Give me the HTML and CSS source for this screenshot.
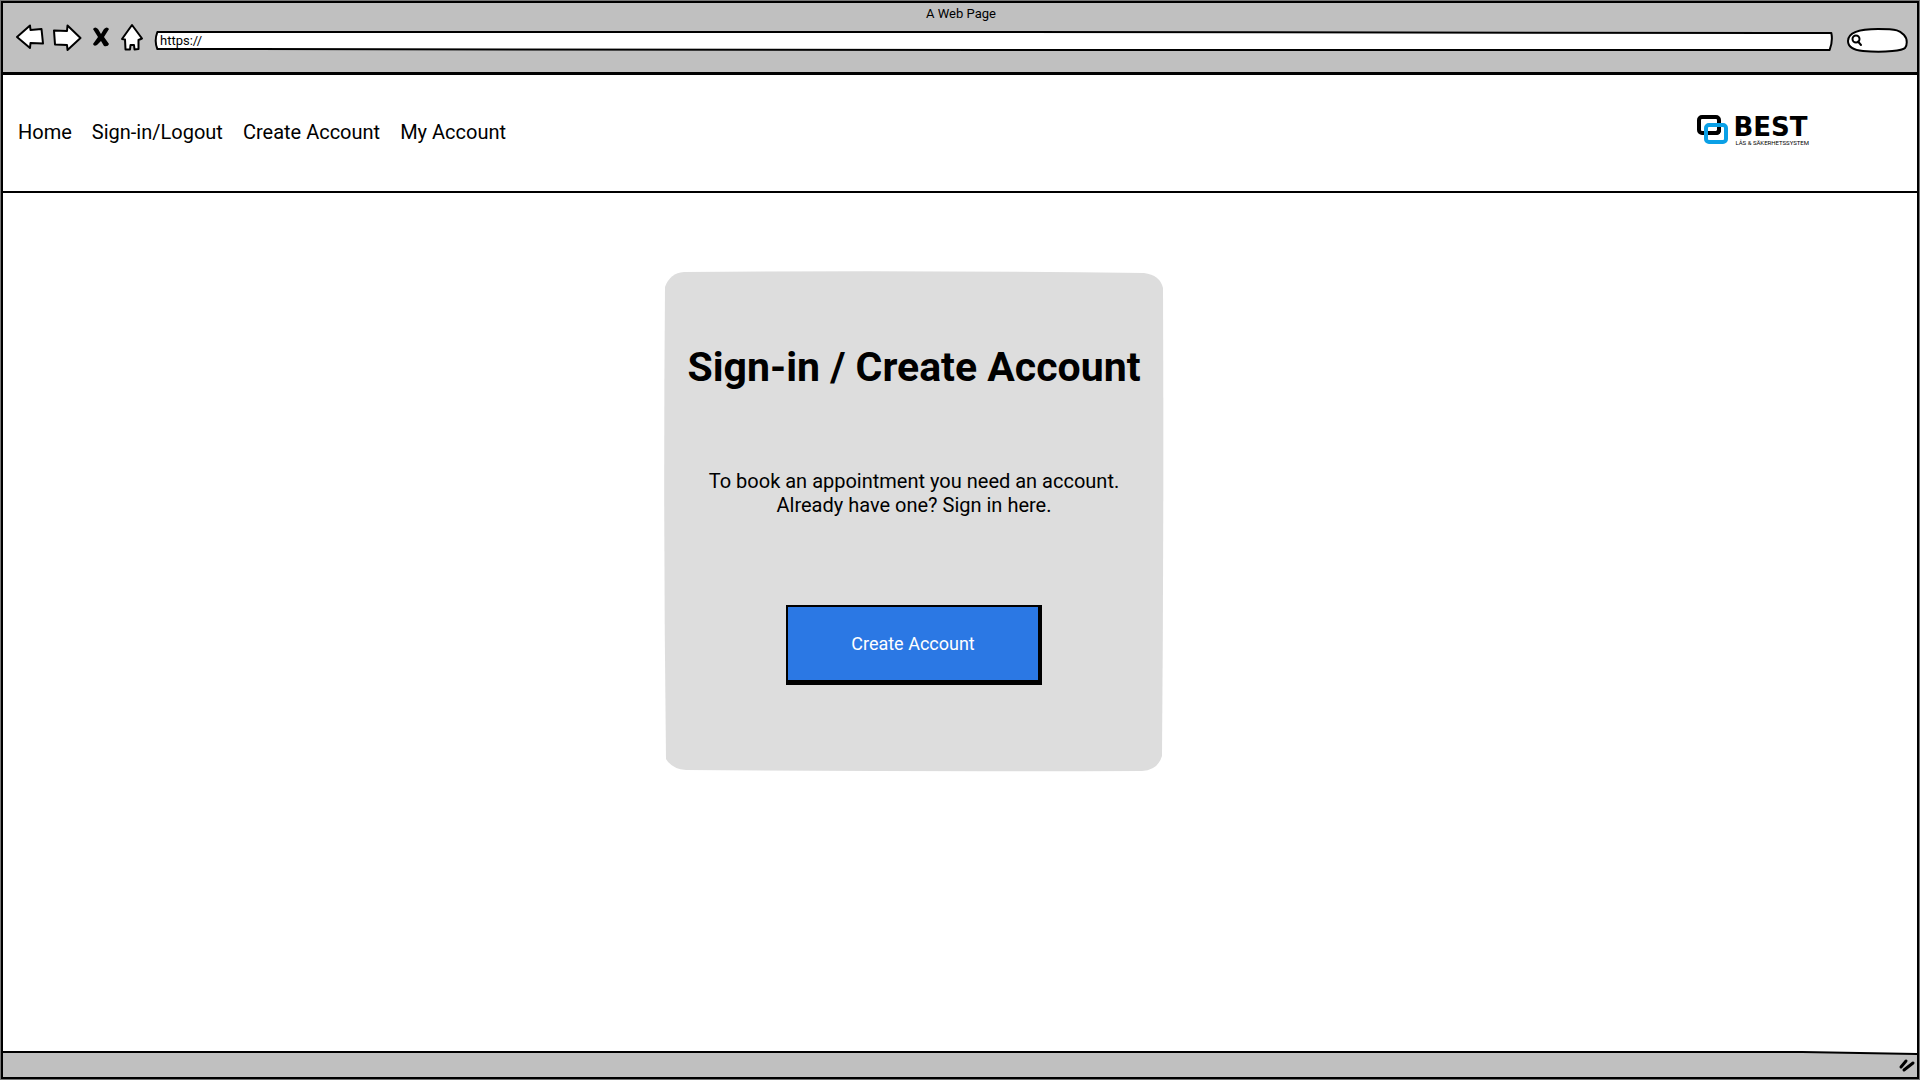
FILE: index.html
```html
<!DOCTYPE html>
<html lang="en">
<head>
<meta charset="utf-8">
<title>A Web Page</title>
<link rel="stylesheet" href="styles.css">
</head>
<body>
<div class="window">
  <div class="chrome">
    <div class="chrome-title">A Web Page</div>
    <div class="toolbar">
      <div class="tools">
        <button class="tool" aria-label="Back"><svg width="30" height="30" viewBox="0 0 30 30"><path class="ink" d="M2 14 15 2.500 15.500 7 26.500 6 28 20.500 15.500 20 15 25Z"/></svg></button>
        <button class="tool" aria-label="Forward"><svg width="30" height="30" viewBox="0 0 30 30"><path class="ink" d="M2 7.500 15 8 15.500 2.500 28.500 15 15.500 27 15 22 3 21.500Z"/></svg></button>
        <button class="tool tool-stop" aria-label="Stop"><svg width="20" height="24" viewBox="0 0 20 24"><path d="M2 3Q4 0 7 3L10 8 13 3Q16 0 18 3L13 11 18 18Q17 21 13 20L10 15 6 19Q3 21 2 18L7 11Z"/></svg></button>
        <button class="tool" aria-label="Home"><svg width="24" height="30" viewBox="0 0 24 30"><path class="ink" d="M12 2 22 15.500 18.500 17 18.500 26 14.500 26.500 14 22 10.500 22 10 26.500 5.500 26.500 5 16.500 2 16Z"/></svg></button>
      </div>
      <div class="field address">
        <svg class="frame" viewBox="0 0 1000 20" preserveAspectRatio="none" aria-hidden="true"><path class="ink" d="M2 1 500 1 999 2Q1000 10 998 19L500 19 2 18Q0 10 2 1Z"/></svg>
        <input class="address-input" type="text" value="https://" aria-label="Address">
      </div>
      <div class="field search">
        <svg class="frame" viewBox="0 0 60 26" preserveAspectRatio="none" aria-hidden="true"><path class="ink" d="M1 13C1 5 10 1 31 1S53 3 57 7 60 18 58 20 40 25 16 23C6 22 1 19 1 13Z"/></svg>
        <svg class="glass" width="12" height="14" viewBox="0 0 12 14" aria-hidden="true"><circle class="line" cx="5" cy="5" r="3.500"/><path class="line" d="M7 7.500 10 11"/></svg>
        <input class="search-input" type="search" aria-label="Search">
      </div>
    </div>
  </div>
  <header class="site-header">
    <nav class="nav">
      <a href="#">Home</a>
      <a href="#">Sign-in/Logout</a>
      <a href="#">Create Account</a>
      <a href="#">My Account</a>
    </nav>
    <a class="logo" href="#">
      <svg width="36" height="32" viewBox="0 0 36 32" aria-hidden="true"><rect x="2" y="3" width="20" height="16" rx="3" fill="none" stroke="#000" stroke-width="4"/><rect x="9" y="11" width="20" height="17" rx="3" fill="none" stroke="#0aa0e6" stroke-width="4"/><path d="M14 19H19Q22 19 22 16V13" fill="none" stroke="#000" stroke-width="4"/></svg>
      <span class="logo-text"><span class="logo-name">BEST</span><span class="logo-tag">LÅS &amp; SÄKERHETSSYSTEM</span></span>
    </a>
  </header>
  <main class="main">
    <section class="card">
      <svg class="frame" viewBox="0 0 500 500" preserveAspectRatio="none" aria-hidden="true"><path fill="#ddd" d="M1 16Q6 2 20 1Q250-1 480 2Q496 4 499 17Q500 250 498 485Q494 499 478 500Q250 501 22 499Q8 498 2 488Q-1 250 1 16Z"/></svg>
      <h1 class="card-title">Sign-in / Create Account</h1>
      <p class="card-text">To book an appointment you need an account.<br>Already have one? Sign in here.</p>
      <button class="cta">Create Account</button>
    </section>
  </main>
  <footer class="status">
    <svg class="frame" viewBox="0 0 1000 26" preserveAspectRatio="none" aria-hidden="true"><path fill="#c0c0c0" d="M0 1H940L1000 3V26H0Z"/><path class="line" d="M0 1H940L1000 3"/></svg>
    <svg class="grip" width="18" height="18" viewBox="0 0 18 18" aria-hidden="true"><path class="thick" d="M3 12 8 6M6 15 15 8"/></svg>
  </footer>
</div>
</body>
</html>
```
FILE: styles.css
```css
* { box-sizing: border-box; }
body {
  margin: 0;
  background: #fff;
  color: #000;
  font-family: Roboto, "Liberation Sans", sans-serif;
  font-size: 20px;
  line-height: 24px;
}
.window {
  display: flex;
  flex-direction: column;
  min-height: 100vh;
  border: 3px solid #000;
  outline: 1px solid #777;
  outline-offset: -1px;
}
.chrome {
  background: #c0c0c0;
  border-bottom: 3px solid #000;
  padding: 3px 10px 18px 12px;
}
.chrome-title { font-size: 13px; line-height: 16px; text-align: center; }
.toolbar { display: flex; align-items: center; gap: 10px; }
.tools { display: flex; align-items: center; gap: 7px; }
.tool {
  display: flex;
  padding: 0;
  border: 0;
  background: none;
}
.tool-stop { margin: 0 2px; }
.ink { fill: #fff; stroke: #000; stroke-width: 2px; stroke-linejoin: round; vector-effect: non-scaling-stroke; }
.line { fill: none; stroke: #000; stroke-width: 2px; stroke-linecap: round; vector-effect: non-scaling-stroke; }
.thick { fill: none; stroke: #000; stroke-width: 3px; stroke-linecap: round; }
.field { position: relative; display: flex; align-items: center; margin-top: 6px; }
.frame { position: absolute; inset: 0; width: 100%; height: 100%; overflow: visible; }
.field input {
  position: relative;
  width: 100%;
  border: 0;
  padding: 0 6px;
  background: none;
  font: inherit;
  outline: 0;
}
.address { flex: 1; height: 20px; font-size: 13px; line-height: 16px; }
.search { width: 60px; height: 26px; margin-left: 4px; font-size: 13px; padding-left: 4px; }
.glass { position: relative; flex: none; }
.site-header {
  display: flex;
  align-items: center;
  justify-content: space-between;
  height: 118px;
  padding: 0 108px 2px 15px;
  border-bottom: 2px solid #000;
}
.nav { display: flex; gap: 20px; }
.nav a { color: #000; text-decoration: none; }
.logo { display: flex; align-items: center; padding-bottom: 4px; color: #000; text-decoration: none; }
.logo-text { display: flex; flex-direction: column; }
.logo-name { font-family: "DejaVu Sans", sans-serif; font-weight: 700; font-size: 26px; line-height: 26px; }
.logo-tag { padding-left: 2px; font-size: 6px; line-height: 6px; }
.main { flex: 1; padding: 78px 92px 80px 0; }
.card {
  position: relative;
  display: flex;
  flex-direction: column;
  align-items: center;
  width: 500px;
  min-height: 500px;
  margin: 0 auto;
  padding: 72px 10px;
  text-align: center;
}
.card > :not(.frame) { position: relative; }
.card-title { margin: 0; font-size: 41px; line-height: 48px; white-space: nowrap; }
.card-text { margin: 78px 0 88px; }
.cta {
  width: 256px;
  height: 80px;
  border: 2px solid #000;
  border-right-width: 4px;
  border-bottom-width: 5px;
  background: #2b78e4;
  color: #fff;
  font: inherit;
  font-size: 18px;
}
.status { position: relative; height: 26px; display: flex; align-items: center; justify-content: flex-end; padding-right: 1px; }
.grip { position: relative; }
```
